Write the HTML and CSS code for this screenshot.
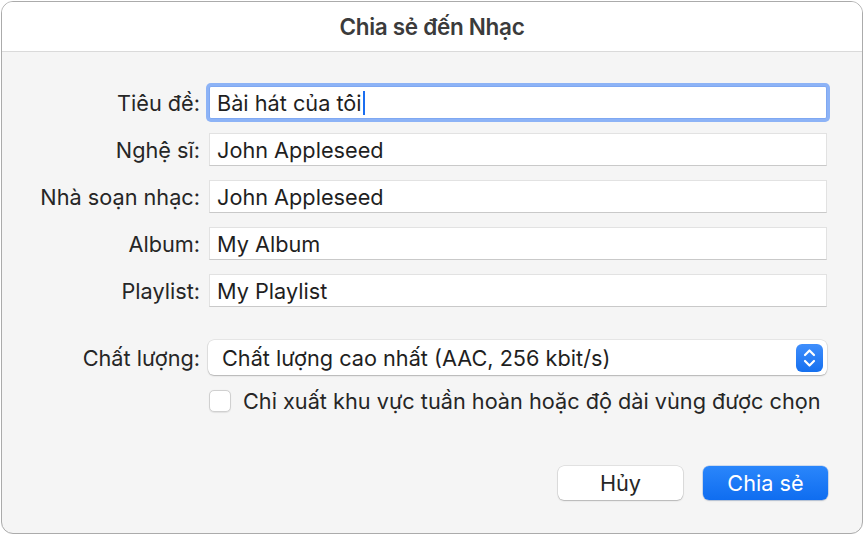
FILE: index.html
```html
<!DOCTYPE html>
<html lang="vi">
<head>
<meta charset="utf-8">
<title>Chia sẻ đến Nhạc</title>
<link rel="stylesheet" href="styles.css">
</head>
<body>
<div class="window">
  <div class="titlebar">Chia sẻ đến Nhạc</div>
  <div class="content">
    <div class="form">
      <label class="label">Tiêu đề:</label>
      <div class="field focused"><span>Bài hát của tôi</span><span class="caret"></span></div>
      <label class="label">Nghệ sĩ:</label>
      <div class="field"><span>John Appleseed</span></div>
      <label class="label">Nhà soạn nhạc:</label>
      <div class="field"><span>John Appleseed</span></div>
      <label class="label">Album:</label>
      <div class="field"><span>My Album</span></div>
      <label class="label">Playlist:</label>
      <div class="field"><span>My Playlist</span></div>

      <label class="label quality-label">Chất lượng:</label>
      <div class="popup">
        <span>Chất lượng cao nhất (AAC, 256 kbit/s)</span>
        <span class="stepper">
          <svg width="27" height="28" viewBox="0 0 27 28">
            <path d="M9 11 L13.5 6.5 L18 11" fill="none" stroke="#fff" stroke-width="2.2" stroke-linecap="round" stroke-linejoin="round"/>
            <path d="M9 17 L13.5 21.5 L18 17" fill="none" stroke="#fff" stroke-width="2.2" stroke-linecap="round" stroke-linejoin="round"/>
          </svg>
        </span>
      </div>
      <div class="spacer"></div>
      <div class="check-row">
        <span class="checkbox"></span>
        <span>Chỉ xuất khu vực tuần hoàn hoặc độ dài vùng được chọn</span>
      </div>
    </div>
    <div class="buttons">
      <button class="btn">Hủy</button>
      <button class="btn primary">Chia sẻ</button>
    </div>
  </div>
</div>
</body>
</html>
```
FILE: styles.css
```css
html, body {
  margin: 0;
  padding: 0;
  background: #ffffff;
}
body {
  font-family: Inter, "Noto Sans", "Liberation Sans", sans-serif;
  color: #262626;
}
.window {
  margin: 1px;
  width: 860px;
  height: 531px;
  border: 1px solid #ababab;
  border-radius: 12px;
  overflow: hidden;
  background: #f5f5f5;
  display: flex;
  flex-direction: column;
}
.titlebar {
  height: 49px;
  flex: none;
  background: #ffffff;
  border-bottom: 1px solid #dadada;
  display: flex;
  align-items: center;
  justify-content: center;
  font-size: 22.5px;
  font-weight: 600;
  color: #3b3b3b;
  letter-spacing: -0.3px;
}
.content {
  flex: 1;
  display: flex;
  flex-direction: column;
  padding-top: 34px;
}
.form {
  display: grid;
  grid-template-columns: 198px 618px;
  column-gap: 9px;
  row-gap: 14px;
  align-items: center;
}
.label {
  text-align: right;
  font-size: 21.7px;
  color: #262626;
  line-height: 26px;
}
.field {
  height: 33px;
  box-sizing: border-box;
  background: #fff;
  border: 1px solid #e2e2e2;
  border-bottom-color: #c9c9c9;
  display: flex;
  align-items: center;
  padding-left: 7px;
  font-size: 21.7px;
  color: #1f1f1f;
}
.field.focused {
  border-color: #7fa8f2;
  border-radius: 2px;
  box-shadow: 0 0 0 3px #8db3f6;
}
.caret {
  display: inline-block;
  width: 2px;
  height: 24px;
  background: #1a6ef0;
  margin-left: 1px;
}
.quality-label {
  margin-top: 19px;
}
.popup {
  margin-top: 19px;
  margin-left: -1px;
  height: 35px;
  box-sizing: border-box;
  background: #fff;
  border-radius: 6px;
  box-shadow: 0 0 0 0.5px rgba(0,0,0,0.12), 0 1px 1.5px rgba(0,0,0,0.22);
  display: flex;
  align-items: center;
  justify-content: space-between;
  padding-left: 14px;
  padding-right: 4px;
  font-size: 21.7px;
  color: #1f1f1f;
}
.stepper {
  width: 27px;
  height: 28px;
  border-radius: 6px;
  background: linear-gradient(#3f8efc, #1570ef);
  display: flex;
}
.check-row {
  display: flex;
  align-items: center;
  gap: 12px;
  font-size: 21.7px;
  color: #262626;
  height: 24px;
}
.checkbox {
  width: 22px;
  height: 22px;
  box-sizing: border-box;
  border: 1px solid #d0d0d0;
  border-radius: 5px;
  background: #fff;
  box-shadow: 0 0.5px 1px rgba(0,0,0,0.08);
}
.buttons {
  display: flex;
  justify-content: flex-end;
  gap: 20px;
  padding-right: 34px;
  margin-top: 53px;
}
.btn {
  width: 125px;
  height: 34px;
  border: none;
  border-radius: 6px;
  background: #fff;
  font-family: inherit;
  font-size: 21.7px;
  color: #262626;
  box-shadow: 0 0 0 0.5px rgba(0,0,0,0.15), 0 1px 1.5px rgba(0,0,0,0.2);
  padding: 0;
}
.btn.primary {
  background: linear-gradient(#2a86fb, #0f6df0);
  color: #fff;
  box-shadow: 0 0 0 0.5px rgba(0,80,200,0.3), 0 1px 1.5px rgba(0,0,0,0.15);
}
```
